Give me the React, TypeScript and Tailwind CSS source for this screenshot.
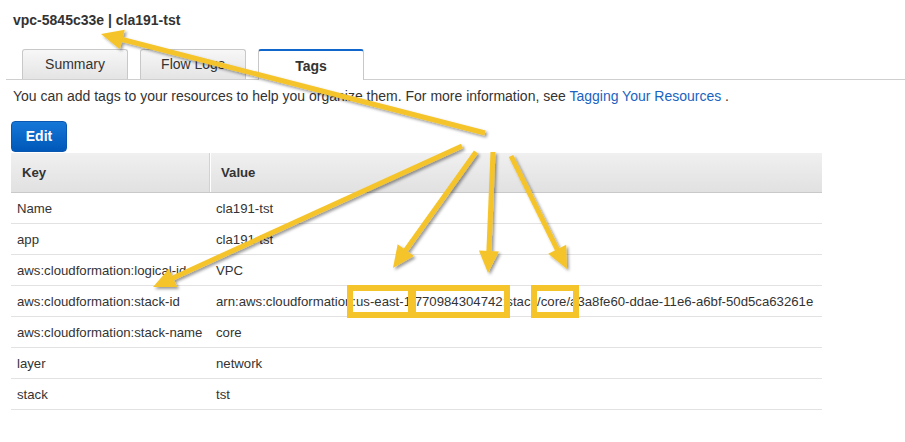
import React from "react";

type Row = { k: string; v: string };

const rows: Row[] = [
  { k: "Name", v: "cla191-tst" },
  { k: "app", v: "cla191-tst" },
  { k: "aws:cloudformation:logical-id", v: "VPC" },
  {
    k: "aws:cloudformation:stack-id",
    v: "arn:aws:cloudformation:us-east-1:770984304742:stack/core/a3a8fe60-ddae-11e6-a6bf-50d5ca63261e",
  },
  { k: "aws:cloudformation:stack-name", v: "core" },
  { k: "layer", v: "network" },
  { k: "stack", v: "tst" },
];

// tail -> head, page coordinates
const arrows: [number, number, number, number][] = [
  [485, 133, 101, 34],
  [462, 146, 153, 287],
  [476, 152, 393, 268],
  [493, 152, 488, 273],
  [511, 156, 567, 269],
];

function Arrow({ a }: { a: [number, number, number, number] }) {
  const [x1, y1, x2, y2] = a;
  const dx = x2 - x1;
  const dy = y2 - y1;
  const len = Math.hypot(dx, dy);
  const ux = dx / len;
  const uy = dy / len;
  const head = 22;
  const half = 10;
  const bx = x2 - ux * head;
  const by = y2 - uy * head;
  const pts = `${x2},${y2} ${bx - uy * half},${by + ux * half} ${bx + uy * half},${by - ux * half}`;
  return (
    <g>
      <line x1={x1} y1={y1} x2={bx + ux * 2} y2={by + uy * 2} stroke="#f5c42b" strokeWidth={5} />
      <polygon points={pts} fill="#f5c42b" />
    </g>
  );
}

function Tab({ label, active }: { label: string; active?: boolean }) {
  if (active) {
    return (
      <div className="relative -mb-px flex h-[31px] w-[106px] items-center justify-center rounded-t-[3px] border-x border-t-2 border-x-[#c8c8c8] border-t-[#1166cc] bg-white pt-[2px] font-bold text-[#333]">
        {label}
      </div>
    );
  }
  return (
    <div className="flex h-[30px] w-[106px] items-center justify-center rounded-t-[3px] border border-b-0 border-[#c8c8c8] bg-gradient-to-b from-[#f7f7f7] to-[#e4e4e4] text-[#333]">
      {label}
    </div>
  );
}

export default function App() {
  return (
    <div
      className="relative h-[442px] w-[905px] overflow-hidden bg-white text-[14px] text-[#333]"
      style={{ fontFamily: '"Liberation Sans", Arial, sans-serif' }}
    >
      <div className="pl-[13px] pt-[10px] text-[14px] font-bold leading-5 text-[#333]">
        vpc-5845c33e | cla191-tst
      </div>

      <div className="ml-[6px] mt-[19px] flex items-end gap-3 border-b border-[#cfcfcf] pl-4">
        <Tab label="Summary" />
        <Tab label="Flow Logs" />
        <Tab label="Tags" active />
      </div>

      <div className="mt-[6px] pl-[13px] leading-5">
        You can add tags to your resources to help you organize them. For more information, see{" "}
        <span className="text-[#1a63c0]">Tagging Your Resources</span> .
      </div>

      <div className="ml-[11px] mt-[15px] flex h-[31px] w-[56px] items-center justify-center rounded-[4px] border border-[#0a57b0] bg-gradient-to-b from-[#1677d8] to-[#0058b8] font-bold text-white">
        Edit
      </div>

      <div className="ml-[11px] mt-px w-[811px] text-[13.2px]">
        <div className="grid h-[40px] grid-cols-[199px_1fr] border-b border-[#c9c9c9] bg-gradient-to-b from-[#f0f0f0] to-[#e1e1e1] font-bold">
          <div className="flex items-center border-r border-[#d2d2d2] pl-[11px]">Key</div>
          <div className="flex items-center border-l border-white pl-[10px]">Value</div>
        </div>
        {rows.map((r) => (
          <div key={r.k} className="grid h-[31px] grid-cols-[199px_1fr] border-b border-[#e2e2e2]">
            <div className="flex items-center pl-[6px] pt-px whitespace-nowrap">{r.k}</div>
            <div className="flex items-center pl-[6px] pt-px whitespace-nowrap">{r.v}</div>
          </div>
        ))}
      </div>

      {/* highlight boxes over the stack-id */}
      <div className="absolute left-[347px] top-[285px] h-[33px] w-[67px] border-[6px] border-[#f5c42b]" />
      <div className="absolute left-[410px] top-[285px] h-[33px] w-[100px] border-[6px] border-[#f5c42b]" />
      <div className="absolute left-[531px] top-[285px] h-[33px] w-[48px] border-[6px] border-[#f5c42b]" />

      <svg className="pointer-events-none absolute inset-0" width={905} height={442}>
        <defs>
          <filter id="sh" x="-20%" y="-20%" width="140%" height="140%">
            <feDropShadow dx="2" dy="2" stdDeviation="1.6" floodColor="#000" floodOpacity="0.4" />
          </filter>
        </defs>
        <g filter="url(#sh)">
          {arrows.map((a, i) => (
            <Arrow key={i} a={a} />
          ))}
        </g>
      </svg>
    </div>
  );
}
